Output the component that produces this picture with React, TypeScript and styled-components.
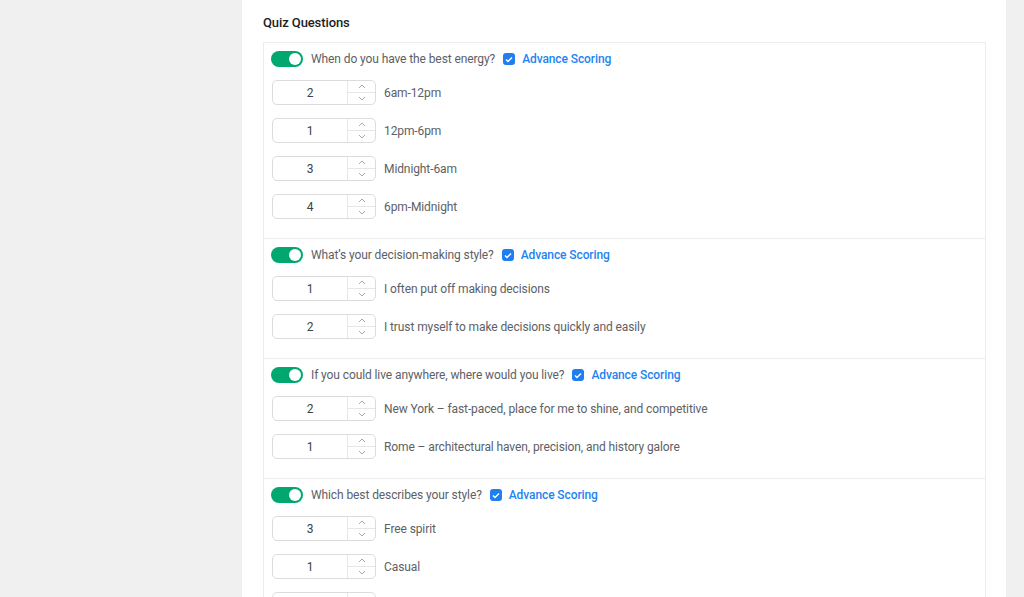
import React from "react";
import styled, { createGlobalStyle } from "styled-components";

interface Option {
  value: number | "";
  label: string;
}

interface Question {
  title: string;
  options: Option[];
}

const questions: Question[] = [
  {
    title: "When do you have the best energy?",
    options: [
      { value: 2, label: "6am-12pm" },
      { value: 1, label: "12pm-6pm" },
      { value: 3, label: "Midnight-6am" },
      { value: 4, label: "6pm-Midnight" },
    ],
  },
  {
    title: "What’s your decision-making style?",
    options: [
      { value: 1, label: "I often put off making decisions" },
      { value: 2, label: "I trust myself to make decisions quickly and easily" },
    ],
  },
  {
    title: "If you could live anywhere, where would you live?",
    options: [
      { value: 2, label: "New York – fast-paced, place for me to shine, and competitive" },
      { value: 1, label: "Rome – architectural haven, precision, and history galore" },
    ],
  },
  {
    title: "Which best describes your style?",
    options: [
      { value: 3, label: "Free spirit" },
      { value: 1, label: "Casual" },
      // below the fold: only the top edge of the box shows
      { value: "", label: "" },
    ],
  },
];

const GlobalStyle = createGlobalStyle`
  html, body {
    margin: 0;
    padding: 0;
    background: #f0f0f1;
    font-family: Roboto, "Liberation Sans", Arial, sans-serif;
    letter-spacing: -0.1px;
  }
  * {
    box-sizing: border-box;
  }
`;

const Page = styled.div`
  display: flex;
  height: 597px;
  overflow: hidden;
`;

const Sidebar = styled.div`
  width: 242px;
  flex-shrink: 0;
`;

const Panel = styled.main`
  width: 764px;
  flex-shrink: 0;
  background: #fff;
  padding: 14px 20px 0 21px;
`;

const Heading = styled.h2`
  margin: 0 0 10px;
  font-size: 13px;
  line-height: 18px;
  font-weight: 500;
  color: #1e1e1e;
`;

const Card = styled.div`
  border: 1px solid #ececec;
`;

const Block = styled.section`
  padding: 7px 7px 19px;
  border-bottom: 1px solid #ececec;
  &:last-child {
    border-bottom: none;
  }
`;

const Header = styled.div`
  display: flex;
  align-items: center;
  height: 18px;
  gap: 8px;
  font-size: 12px;
  color: #5c6166;
`;

const Toggle = styled.span`
  position: relative;
  width: 32px;
  height: 16px;
  border-radius: 8px;
  background: #00a870;
  flex-shrink: 0;
  &::after {
    content: "";
    position: absolute;
    top: 2px;
    right: 2px;
    width: 12px;
    height: 12px;
    border-radius: 50%;
    background: #fff;
  }
`;

const Check = styled.span`
  display: inline-flex;
  align-items: center;
  justify-content: center;
  width: 12px;
  height: 12px;
  border-radius: 3px;
  background: #1f7ff0;
  flex-shrink: 0;
`;

const AdvanceLink = styled.span`
  margin-left: -1px;
  color: #1f84f0;
  font-weight: 500;
  font-size: 12px;
`;

const Options = styled.div`
  display: flex;
  flex-direction: column;
  gap: 13px;
  margin-top: 12px;
`;

const OptionRow = styled.div`
  display: flex;
  align-items: center;
  gap: 8px;
  padding-left: 1px;
`;

const NumberBox = styled.div`
  display: flex;
  width: 104px;
  height: 25px;
  border: 1px solid #dcdcde;
  border-radius: 5px;
  overflow: hidden;
  flex-shrink: 0;
`;

const NumberValue = styled.div`
  flex: 1;
  display: flex;
  align-items: center;
  justify-content: center;
  font-size: 12px;
  color: #3c434a;
`;

const Stepper = styled.div`
  width: 28px;
  display: flex;
  flex-direction: column;
  border-left: 1px solid #e6e6e6;
`;

const StepButton = styled.div<{ $top?: boolean }>`
  flex: 1;
  display: flex;
  align-items: center;
  justify-content: center;
  border-bottom: ${(p) => (p.$top ? "1px solid #e6e6e6" : "none")};
`;

const OptionLabel = styled.span`
  font-size: 12px;
  color: #5c6166;
`;

const Chevron = ({ up }: { up?: boolean }) => (
  <svg width="8" height="5" viewBox="0 0 8 5">
    <polyline
      points={up ? "1,4 4,1 7,4" : "1,1 4,4 7,1"}
      fill="none"
      stroke="#a7aaad"
      strokeWidth="1"
    />
  </svg>
);

const CheckMark = () => (
  <svg width="8" height="7" viewBox="0 0 8 7">
    <polyline points="1,3.5 3,5.5 7,1.5" fill="none" stroke="#fff" strokeWidth="1.4" />
  </svg>
);

const App = () => (
  <>
    <GlobalStyle />
    <Page>
      <Sidebar />
      <Panel>
        <Heading>Quiz Questions</Heading>
        <Card>
          {questions.map((q) => (
            <Block key={q.title}>
              <Header>
                <Toggle />
                <span>{q.title}</span>
                <Check>
                  <CheckMark />
                </Check>
                <AdvanceLink>Advance Scoring</AdvanceLink>
              </Header>
              <Options>
                {q.options.map((o, i) => (
                  <OptionRow key={i}>
                    <NumberBox>
                      <NumberValue>{o.value}</NumberValue>
                      <Stepper>
                        <StepButton $top>
                          <Chevron up />
                        </StepButton>
                        <StepButton>
                          <Chevron />
                        </StepButton>
                      </Stepper>
                    </NumberBox>
                    {o.label && <OptionLabel>{o.label}</OptionLabel>}
                  </OptionRow>
                ))}
              </Options>
            </Block>
          ))}
        </Card>
      </Panel>
    </Page>
  </>
);

export default App;
